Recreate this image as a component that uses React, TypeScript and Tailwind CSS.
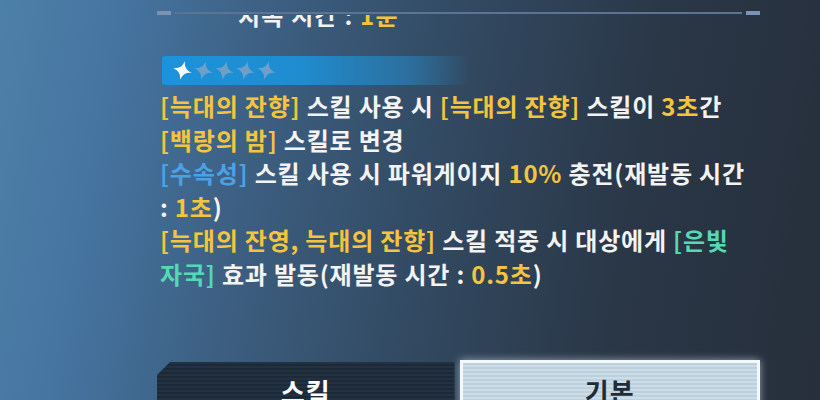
import { ReactNode } from "react";

const Y = ({ children }: { children: ReactNode }) => (
  <span className="text-[#f4c43e]">{children}</span>
);

const G = ({ children }: { children: ReactNode }) => (
  <span className="text-[#55d9b5]">{children}</span>
);

function Star({ on }: { on?: boolean }) {
  return (
    <svg width="19" height="19" viewBox="0 0 16 16" className="rotate-[14deg]">
      <path
        d="M8 0 C9 5 11 7 16 8 C11 9 9 11 8 16 C7 11 5 9 0 8 C5 7 7 5 8 0Z"
        fill={on ? "#ffffff" : "#7ba3c7"}
        fillOpacity={on ? 1 : 0.85}
      />
    </svg>
  );
}

export default function App() {
  return (
    <div className="relative w-[820px] h-[400px] overflow-hidden font-['Noto_Sans_CJK_KR','Noto_Sans',sans-serif] bg-[linear-gradient(100deg,#4d80a8_0%,#4574a0_14%,#3c5e80_32%,#324a62_52%,#2a3747_75%,#262f3b_100%)]">
      <div className="pl-[157px] pr-[60px] flex flex-col h-full">
        {/* top rule */}
        <div className="shrink-0 flex items-center gap-[4px] pt-[11px] h-[15px]">
          <div className="w-[14px] h-[4px] bg-[#7a93b3]" />
          <div className="flex-1 h-[2px] bg-[#5c7392]" />
          <div className="w-[14px] h-[4px] bg-[#7a93b3]" />
        </div>

        {/* scrolled content */}
        <div className="shrink-0 h-[347px] overflow-hidden flex flex-col">
          <div className="-mt-[13px] pl-[81px] text-[24px] leading-[26px] font-bold text-[#f2f2f2] tracking-[1.2px]">
            지속 시간 : <Y>1분</Y>
          </div>

          <div className="mt-[28px] ml-[5px] w-[308px] h-[29px] shrink-0 rounded-[3px] flex items-center gap-[2px] pl-[11px] bg-[linear-gradient(90deg,#1b93dc_0%,#1f8ccf_45%,#2c6f9e_80%,rgba(44,80,110,0)_100%)]">
            <Star on />
            <Star />
            <Star />
            <Star />
            <Star />
          </div>

          <div className="mt-[4px] pl-[3px] w-[620px] whitespace-nowrap text-[24px] leading-[33.5px] font-bold text-[#f3f3f3] tracking-[0.8px]">
            <p>
              <Y>[늑대의 잔향]</Y> 스킬 사용 시 <Y>[늑대의 잔향]</Y> 스킬이 <Y>3초</Y>간
              <br />
              <Y>[백랑의 밤]</Y> 스킬로 변경
            </p>
            <p>
              <span className="text-[#4aa2e6]">[수속성]</span> 스킬 사용 시 파워게이지 <Y>10%</Y> 충전(재발동 시간
              <br />: <Y>1초</Y>)
            </p>
            <p>
              <Y>[늑대의 잔영, 늑대의 잔향]</Y> 스킬 적중 시 대상에게 <G>[은빛</G>
              <br />
              <G>자국]</G> 효과 발동(재발동 시간 : <Y>0.5초</Y>)
            </p>
          </div>
        </div>

        {/* tabs */}
        <div className="shrink-0 flex gap-[5px]">
          <div className="w-[298px] h-[60px] [clip-path:polygon(13px_0,100%_0,100%_100%,0_100%,0_13px)] bg-[repeating-linear-gradient(0deg,#1c2a38_0px,#1c2a38_2px,#223242_2px,#223242_4px)] flex justify-center pt-[14px]">
            <span className="text-[26px] leading-[30px] font-bold text-white tracking-[1px]">스킬</span>
          </div>
          <div className="w-[301px] h-[62px] -mt-[2px] border-[3px] border-[#f4f8fb] shadow-[0_0_8px_rgba(220,235,245,0.6)] bg-[repeating-linear-gradient(0deg,#cadde8_0px,#cadde8_2px,#bdd1dd_2px,#bdd1dd_4px)] flex justify-center pt-[13px]">
            <span className="text-[26px] leading-[30px] font-bold text-[#1f2b36] tracking-[1px]">기본</span>
          </div>
        </div>
      </div>
    </div>
  );
}
